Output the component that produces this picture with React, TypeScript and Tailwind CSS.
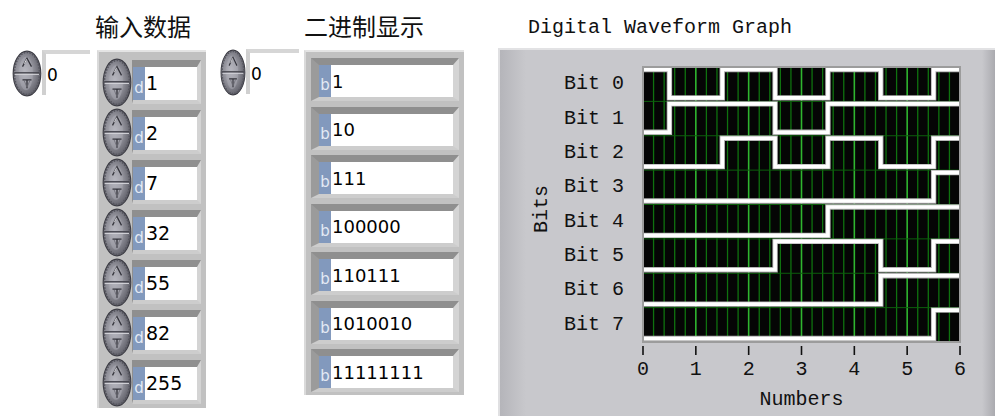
import React, { useId } from 'react';

const values = [1, 2, 7, 32, 55, 82, 255];

// plot geometry
const PW = 317;
const PH = 275;
const RH = PH / 8;
const XU = PW / 6;

const Spinner: React.FC<{ w?: number; h?: number }> = ({ w = 30, h = 48 }) => {
  const id = useId().replace(/:/g, '');
  return (
    <svg width={w} height={h} viewBox="0 0 30 48" preserveAspectRatio="none" className="shrink-0">
      <defs>
        <radialGradient id={`g${id}`} cx="42%" cy="45%" r="60%">
          <stop offset="0%" stopColor="#bdbdc5" />
          <stop offset="55%" stopColor="#8d8d96" />
          <stop offset="100%" stopColor="#5b5b64" />
        </radialGradient>
      </defs>
      <ellipse cx="15" cy="24" rx="13.8" ry="22.8" fill={`url(#g${id})`} stroke="#3c3c44" strokeWidth="1.2" />
      <ellipse cx="15" cy="24" rx="12.6" ry="21.6" fill="none" stroke="#55555e" strokeWidth="1.6" strokeDasharray="1.6 1.4" />
      <ellipse cx="14" cy="24" rx="7" ry="17" fill="#b0b0b8" opacity="0.45" />
      <line x1="2.5" y1="23.3" x2="27.5" y2="23.3" stroke="#45454d" strokeWidth="1.4" />
      <line x1="3" y1="24.9" x2="27" y2="24.9" stroke="#d4d4da" strokeWidth="1" />
      {/* up arrow */}
      <path d="M10.5 17 L15 8.5 L19.5 17" fill="none" stroke="#33333b" strokeWidth="1.3" />
      <path d="M14.6 9.5 L12.4 14" stroke="#eeeef2" strokeWidth="0.9" />
      {/* down arrow */}
      <path d="M10.5 30.5 L19.5 30.5 M15 30.5 L15 39" fill="none" stroke="#33333b" strokeWidth="1.3" />
      <path d="M12 31 L15 38 L18 31" fill="none" stroke="#6a6a72" strokeWidth="0.8" />
    </svg>
  );
};

const IndexDisplay: React.FC<{ spinW: number; fieldW: number }> = ({ spinW, fieldW }) => (
  <div className="flex items-start">
    <Spinner w={spinW} h={47} />
    <div
      style={{ width: fieldW }}
      className="h-[45px] border-t-[4px] border-l-[4px] border-t-[#d6d6d6] border-l-[#d0d0d0] pl-[1px] pt-[11px] text-[17px] leading-[20px] text-black"
    >
      0
    </div>
  </div>
);

const NumericRow: React.FC<{ v: number }> = ({ v }) => (
  <div className="flex h-[50px] items-start">
    <Spinner w={30} h={49} />
    <div className="mt-[2px] flex border-t-[7px] border-r-[4px] border-b-[4px] border-l-[1px] border-t-[#8f8f8f] border-r-[#d4d4d4] border-b-[#cdcdcd] border-l-[#8f8f8f]">
      <div className="flex h-[33px] w-[12px] items-end justify-center bg-[#8299bd] pb-[4px] text-[15px] leading-[16px] text-[#e4eaf4]">d</div>
      <div className="flex h-[33px] w-[52px] items-center bg-white pl-[1px] text-[19px] text-black">{v}</div>
    </div>
  </div>
);

const BinaryRow: React.FC<{ s: string }> = ({ s }) => (
  <div className="flex h-[48.5px] items-start">
    <div className="flex border-t-[7px] border-r-[6px] border-b-[4px] border-l-[8px] border-t-[#8f8f8f] border-r-[#d4d4d4] border-b-[#cdcdcd] border-l-[#9b9b9b]">
      <div className="flex h-[32px] w-[12px] items-end justify-center bg-[#8299bd] pb-[4px] text-[15px] leading-[16px] text-[#e4eaf4]">b</div>
      <div className="flex h-[32px] w-[122px] items-center bg-white pl-[1px] text-[18px] text-black">{s}</div>
    </div>
  </div>
);

const WavePlot: React.FC = () => {
  const lines: React.ReactNode[] = [];
  for (let k = 0; k <= 30; k++) {
    const x = (k * PW) / 30;
    const major = k % 5 === 0;
    lines.push(
      <line key={`v${k}`} x1={x} y1={0} x2={x} y2={PH} stroke={major ? '#2fb52f' : '#0f720f'} strokeWidth={major ? 1.6 : 1.3} />
    );
  }
  for (let r = 1; r < 8; r++) {
    lines.push(<line key={`h${r}`} x1={0} y1={r * RH} x2={PW} y2={r * RH} stroke="#0d5f0d" strokeWidth={1} />);
  }

  const waves = Array.from({ length: 8 }, (_, b) => {
    const top = b * RH;
    let d = '';
    values.forEach((n, i) => {
      const y = (n >> b) & 1 ? top + 2.5 : top + RH - 3.5;
      const x0 = Math.max(0, i - 0.5) * XU;
      const x1 = Math.min(6, i + 0.5) * XU;
      d += i === 0 ? `M${x0} ${y} L${x1} ${y} ` : `L${x0} ${y} L${x1} ${y} `;
    });
    return (
      <g key={b}>
        <path d={d} fill="none" stroke="#b4b4b4" strokeWidth={5.4} />
        <path d={d} fill="none" stroke="#ffffff" strokeWidth={3.6} />
      </g>
    );
  });

  return (
    <svg width={PW} height={PH + 40} overflow="visible" className="block">
      <rect x={0} y={0} width={PW} height={PH} fill="#050505" />
      {lines}
      {waves}
      <rect x={0} y={0} width={PW} height={PH} fill="none" stroke="#9c9c9c" strokeWidth={2} />
      {Array.from({ length: 7 }, (_, k) => (
        <g key={k}>
          <line x1={k * XU} y1={279} x2={k * XU} y2={288} stroke="#111" strokeWidth={1.6} />
          <text x={k * XU} y={308} textAnchor="middle" fontFamily="'Liberation Mono', monospace" fontSize={20} fill="#111">
            {k}
          </text>
        </g>
      ))}
    </svg>
  );
};

export default function App() {
  return (
    <div className="flex h-[416px] w-[995px] items-start overflow-hidden bg-white font-['DejaVu_Sans',sans-serif] text-black">
      {/* index of first array */}
      <div className="ml-[12px] pt-[50px]">
        <IndexDisplay spinW={30} fieldW={48} />
      </div>

      {/* 输入数据 */}
      <div className="ml-[5px] w-[110px]">
        <div className="h-[50px] pt-[12px] font-['Noto_Sans_CJK_SC',sans-serif] text-[24px] leading-[28px] text-[#111]">输入数据</div>
        <div className="ml-[2px] h-[358px] w-[109px] border-t-[2px] border-l-[2px] border-t-[#e4e4e4] border-l-[#dadada] bg-[#c1c1c1] pl-[3px] pt-[6px]">
          {values.map((v) => (
            <NumericRow key={v} v={v} />
          ))}
        </div>
      </div>

      {/* index of second array */}
      <div className="ml-[15px] pt-[49px]">
        <IndexDisplay spinW={26} fieldW={53} />
      </div>

      {/* 二进制显示 */}
      <div className="ml-[5px] w-[160px]">
        <div className="h-[50px] pt-[12px] font-['Noto_Sans_CJK_SC',sans-serif] text-[24px] leading-[28px] text-[#111]">二进制显示</div>
        <div className="h-[345px] w-[160px] border-t-[2px] border-l-[2px] border-t-[#e4e4e4] border-l-[#dadada] bg-[#c1c1c1] pl-[5px] pt-[6px]">
          {values.map((v) => (
            <BinaryRow key={v} s={v.toString(2)} />
          ))}
        </div>
      </div>

      {/* Digital Waveform Graph */}
      <div className="ml-[34px] w-[498px] font-['Liberation_Mono',monospace] text-[20px] text-[#111]">
        <div className="h-[48px] pl-[30px] pt-[16px] leading-[24px]">Digital Waveform Graph</div>
        <div className="flex h-[368px] w-[498px] border-t-[2px] border-l-[2px] border-t-[#e2e2e4] border-l-[#e0e0e2] bg-[linear-gradient(to_right,#b5b5ba_0px,#c8c8cc_26px,#c8c8cc_calc(100%-14px),#a8a8ad_100%)] pt-[17px]">
          <div className="flex h-[275px] w-[64px] items-center justify-center pl-[20px] pt-[9px]">
            <span className="-rotate-90 whitespace-nowrap leading-[20px]">Bits</span>
          </div>
          <div className="flex w-[60px] flex-col">
            {Array.from({ length: 8 }, (_, b) => (
              <div key={b} className="flex h-[34.375px] items-center justify-end whitespace-pre leading-[20px]">
                {`Bit ${b}`}
              </div>
            ))}
          </div>
          <div className="ml-[19px] w-[317px]">
            <WavePlot />
            <div className="mt-[6px] text-center leading-[24px]">Numbers</div>
          </div>
        </div>
      </div>
    </div>
  );
}
